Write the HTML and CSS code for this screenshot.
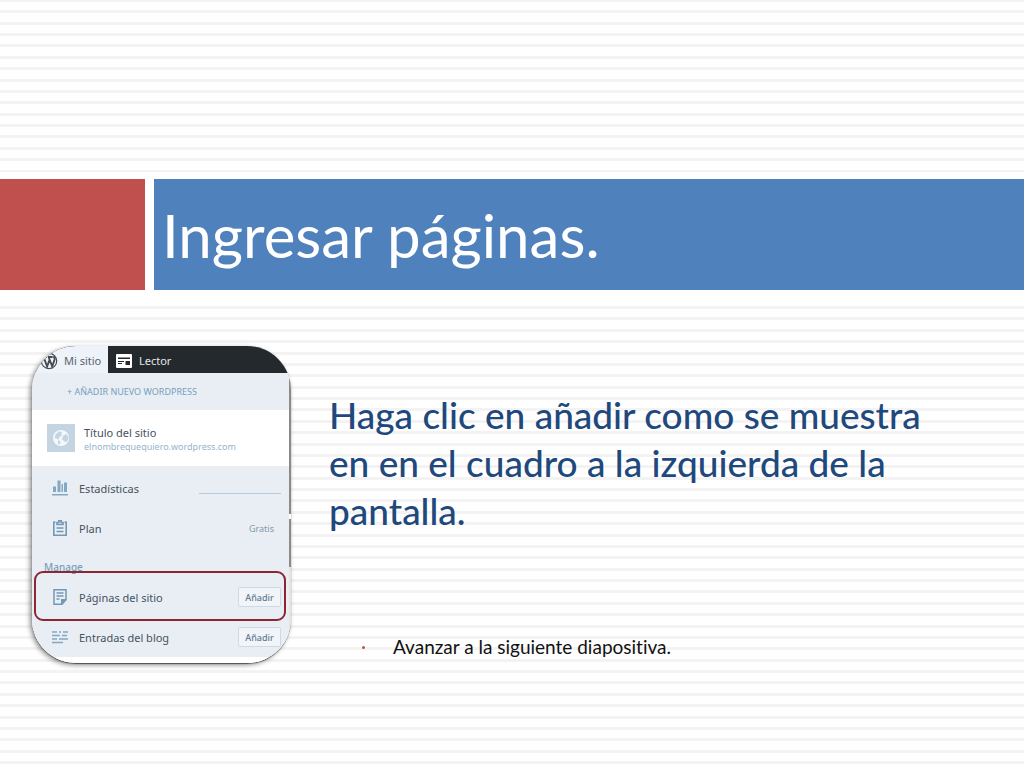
FILE: index.html
```html
<!DOCTYPE html>
<html lang="es">
<head>
<meta charset="utf-8">
<meta name="viewport" content="width=device-width, initial-scale=1">
<title>Ingresar páginas</title>
<link rel="stylesheet" href="styles.css">
</head>
<body>
<main class="slide">
  <header class="band">
    <div class="band-accent"></div>
    <h1 class="band-title">Ingresar páginas.</h1>
  </header>

  <div class="content">
    <section class="card" aria-label="Menú del sitio">
      <div class="panel">
        <nav class="tabs">
          <a class="tab tab-active" href="#sitio">
            <svg class="wp" viewBox="0 0 18 18" aria-hidden="true">
              <circle cx="9" cy="9" r="7.7" fill="none" stroke="#454b50" stroke-width="1.2"/>
              <path d="M2.500 5h4.500M8 5h4.600M3.800 5.500l3.300 9 2.400-6.500M8.800 5.500l3.400 9 2.400-7c.4-1.400-.8-2-.8-3.200" fill="none" stroke="#454b50" stroke-width="1.900"/>
            </svg>
            Mi sitio
          </a>
          <a class="tab tab-dark" href="#lector">
            <svg class="reader" viewBox="0 0 16 14" aria-hidden="true">
              <rect width="16" height="14" rx="1" fill="#fff"/>
              <path d="M2 3.500h12V5H2zM9.500 7H14v4H9.500zM2 7h6v1H2zM2 9h4v1H2z" fill="#24292d"/>
            </svg>
            Lector
          </a>
        </nav>
        <a class="add-site" href="#nuevo">+ AÑADIR NUEVO WORDPRESS</a>
        <div class="site">
          <svg class="site-icon" viewBox="0 0 28 28" aria-hidden="true">
            <rect width="28" height="28" fill="#c5d4e1"/>
            <circle cx="14" cy="14" r="8" fill="#f4f8fb"/>
            <path d="M8.500 10.500l3.500-3 3 .5-1 2 1.500 1-3 2-1 2.500-2-1-1.800-.5zM16 12l3-2 2.500 3-.5 3-2.500 2.500-2-2-1.500-1zM11 16l2.500 1.500-.5 3-2-1z" fill="#c5d4e1"/>
          </svg>
          <div class="site-text">
            <span class="site-name">Título del sitio</span>
            <a class="site-url" href="#url">elnombrequequiero.wordpress.com</a>
          </div>
        </div>
        <div class="menu">
          <div class="row">
            <svg class="icon" viewBox="0 0 16 16" aria-hidden="true">
              <path d="M1 6.500h3V12H1zM5.500.500h3V12h-3zM9.500 4H11v8H9.500zM12 2.500h3V12h-3zM0 14h16v1.500H0z" fill="#83a8c4"/>
            </svg>
            <a class="label" href="#stats">Estadísticas</a>
            <span class="spark"></span>
          </div>
          <div class="row">
            <svg class="icon" viewBox="0 0 16 16" aria-hidden="true">
              <path d="M3.500 2.200H1.800v13h12.400v-13h-1.700M5 4.500V2.500h1.800V.800h2.400v1.700H11v2zM4.500 8h7M4.500 11.500h7" fill="none" stroke="#7198b6" stroke-width="1.600"/>
            </svg>
            <a class="label" href="#plan">Plan</a>
            <span class="plan">Gratis</span>
          </div>
          <h2 class="group">Manage</h2>
          <div class="row row-marked">
            <svg class="icon" viewBox="0 0 16 16" aria-hidden="true">
              <path d="M2 .8h12v10l-4 4.400H2zM4.500 4h7M4.500 7h7M4.500 10h3" fill="none" stroke="#7198b6" stroke-width="1.500"/>
              <path d="M9 10h5.500L9 15.700z" fill="#7198b6"/>
            </svg>
            <a class="label" href="#paginas">Páginas del sitio</a>
            <button class="add" type="button">Añadir</button>
          </div>
          <div class="row">
            <svg class="icon" viewBox="0 0 16 16" aria-hidden="true">
              <path d="M0 3h5M7 3h2M11 3h5M0 6.500h8M10 6.500h5M0 10h5M7 10h9M0 13.500h11" fill="none" stroke="#83a8c4" stroke-width="1.600"/>
            </svg>
            <a class="label" href="#entradas">Entradas del blog</a>
            <button class="add" type="button">Añadir</button>
          </div>
        </div>
      </div>
    </section>

    <section class="text">
      <p class="lead">Haga clic en añadir como se muestra en en el cuadro a la izquierda de la pantalla.</p>
      <ul class="notes">
        <li>Avanzar a la siguiente diapositiva.</li>
      </ul>
    </section>
  </div>
</main>
</body>
</html>
```

FILE: styles.css
```css
* { box-sizing: border-box; }

body {
  margin: 0;
  font-family: Lato, "Liberation Sans", sans-serif;
  font-variant-ligatures: none;
  background-color: #fff;
  /* eight ruled lines in every 91px tile */
  background-image: linear-gradient(
    #f3f3f3 0 3px, transparent 3px 11px,
    #f3f3f3 11px 14px, transparent 14px 23px,
    #f3f3f3 23px 26px, transparent 26px 34px,
    #f3f3f3 34px 37px, transparent 37px 45px,
    #f3f3f3 45px 48px, transparent 48px 57px,
    #f3f3f3 57px 60px, transparent 60px 68px,
    #f3f3f3 68px 71px, transparent 71px 80px,
    #f3f3f3 80px 83px, transparent 83px);
  background-size: 100% 91px;
  background-position: 0 -1px;
}

a { color: inherit; text-decoration: none; }

.slide {
  min-height: 100vh;
  padding-top: 172px;
}

.band {
  display: flex;
  gap: 9px;
  padding: 7px 0 14px;
  background: #fff;
}

.band-accent { flex: 0 0 145px; background: #c0504d; }

.band-title {
  flex: 1;
  margin: 0;
  padding: 20px 8px 19px;
  background: #4f81bd;
  color: #fff;
  font-size: 60px;
  line-height: 72px;
  font-weight: 400;
}

.content {
  display: flex;
  align-items: flex-start;
  gap: 38px;
  padding: 42px 96px 40px 32px;
}

.card {
  flex: 0 0 259px;
  padding-right: 2px;
  border-radius: 44px;
  overflow: hidden;
  background: linear-gradient(#8a8a8a 0 168px, #fff 168px 173px, #8a8a8a 173px 221px, #e6e4df 221px);
  box-shadow: -2px 2px 5px rgba(0, 0, 0, .45), 0 1px 1px #777;
  font-family: "Noto Sans", sans-serif;
  font-size: 11px;
  color: #46525f;
}

.panel { background: #fff; padding-bottom: 6px; }

.tabs { display: flex; background: #24292d; }

.tab {
  display: flex;
  align-items: center;
  gap: 7px;
  height: 27px;
  padding: 2px 8px 0;
}

.tab-active { width: 76px; padding-right: 0; gap: 6px; background: #edf3f9; color: #59636e; }
.tab-dark { color: #e3e6e9; }
.wp { flex: none; width: 18px; height: 18px; }
.reader { width: 16px; height: 14px; }

.add-site {
  display: block;
  padding-left: 35px;
  background: #e8eef4;
  color: #789ebb;
  font-size: 9px;
  line-height: 37px;
}

.site {
  display: flex;
  align-items: center;
  gap: 9px;
  height: 56px;
  padding-left: 15px;
}

.site-icon { width: 28px; height: 28px; }
.site-text { display: flex; flex-direction: column; padding-top: 2px; }
.site-name { line-height: 15px; }
.site-url { color: #96b5cc; font-size: 9px; line-height: 13px; }

.menu { padding-top: 2px; background: #e8eef4; }

.row {
  position: relative;
  display: flex;
  align-items: center;
  gap: 11px;
  height: 40px;
  padding: 0 8px 0 20px;
}

.icon { width: 16px; height: 16px; }
.label { flex: 1; }
.spark { width: 82px; height: 1px; margin-top: 10px; background: #b4cadb; }
.plan { padding-right: 7px; color: #8199ad; font-size: 9px; }

.group {
  margin: 0;
  padding: 12px 0 3px 12px;
  color: #789ebb;
  font-size: 10px;
  line-height: 14px;
  font-weight: 500;
}

.row-marked::after {
  content: "";
  position: absolute;
  inset: -6px 3px -4px 2px;
  border: 2px solid #8c2631;
  border-radius: 9px;
  pointer-events: none;
}

.add {
  width: 43px;
  height: 20px;
  padding: 0;
  border: 1px solid #cddae5;
  border-radius: 2px;
  background: #f1f5f9;
  color: #617c93;
  font: 500 9px "Noto Sans", sans-serif;
}

.text { flex: 1; padding-top: 45px; }

.lead {
  margin: 0;
  color: #1f497d;
  font-size: 37px;
  line-height: 48px;
  font-weight: 500;
}

.notes {
  display: flex;
  margin: 100px 0 0;
  padding: 0 0 0 33px;
  list-style: none;
  font-size: 19px;
  line-height: 24px;
  color: #111;
}

.notes li { display: flex; align-items: center; gap: 28px; }

.notes li::before {
  content: "";
  width: 3px;
  height: 3px;
  border-radius: 50%;
  background: #c0504d;
}
```
